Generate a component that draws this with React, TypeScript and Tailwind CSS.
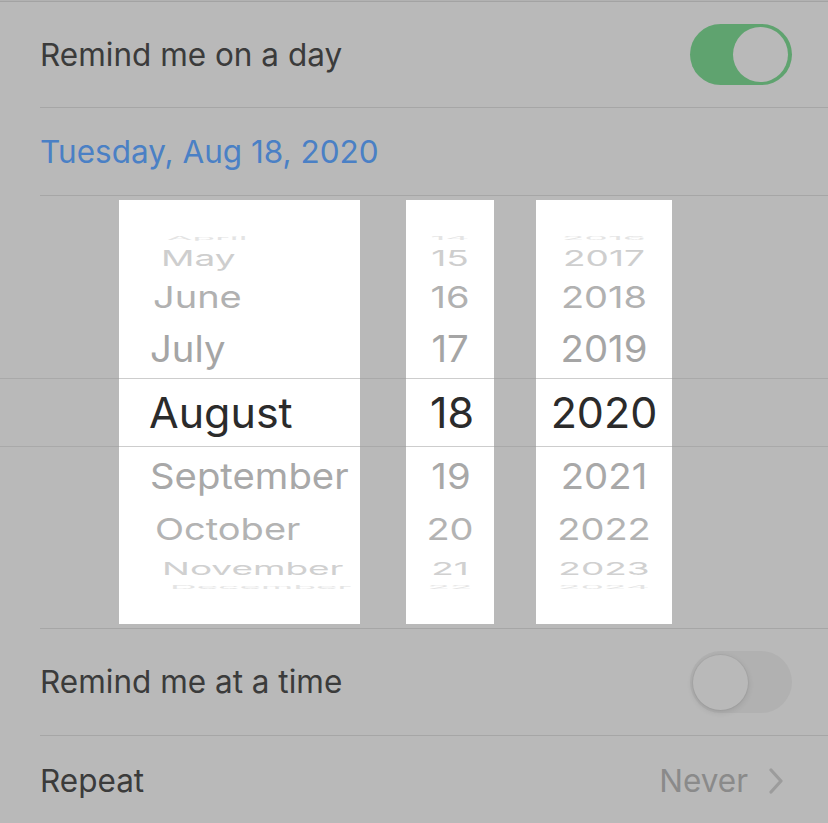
import React from "react";

type Row = { t: string; f: number; sy: number; c: string; pl: string };

const font = { fontFamily: "Inter, 'Noto Sans', sans-serif" };

function PickerColumn({
  rows,
  width,
  align,
}: {
  rows: Row[];
  width: string;
  align: "left" | "center";
}) {
  const heights = [
    "h-[10px]",
    "h-[30px]",
    "h-[47px]",
    "h-[58px]",
    "h-[69px]",
    "h-[58px]",
    "h-[48px]",
    "h-[31px]",
    "h-[6px]",
  ];
  return (
    <div className={`${width} h-[424px] bg-white flex flex-col overflow-hidden`}>
      <div className="h-[33px] shrink-0" />
      {rows.map((r, i) => (
        <div
          key={i}
          className={`${heights[i]} shrink-0 flex items-center ${
            align === "center" ? "justify-center" : "justify-start"
          } ${r.pl} ${i === 4 ? "border-y border-[#cdcdcd]" : ""} overflow-visible`}
        >
          <span
            className="leading-none whitespace-nowrap"
            style={{
              fontSize: r.f,
              color: r.c,
              transform: `scaleY(${r.sy})`,
              display: "inline-block",
            }}
          >
            {r.t}
          </span>
        </div>
      ))}
    </div>
  );
}

const colors = ["#e4e4e4", "#cecece", "#b1b1b1", "#a5a5a5", "#2b2b2b", "#a8a8a8", "#b3b3b3", "#d0d0d0", "#e4e4e4"];
const sizes = [37, 37, 38, 38.3, 43, 38.3, 38, 37, 37];
const sys = [0.12, 0.58, 0.8, 0.95, 0.98, 0.93, 0.8, 0.48, 0.12];

function mk(texts: string[], pls: string[]): Row[] {
  return texts.map((t, i) => ({ t, f: sizes[i], sy: sys[i], c: colors[i], pl: pls[i] }));
}

const months = mk(
  ["April", "May", "June", "July", "August", "September", "October", "November", "December"],
  ["pl-[48px]", "pl-[42px]", "pl-[34px]", "pl-[31px]", "pl-[30px]", "pl-[31px]", "pl-[36px]", "pl-[43px]", "pl-[51px]"]
);
const days = mk(
  ["14", "15", "16", "17", "18", "19", "20", "21", "22"],
  ["", "", "", "", "pl-[4px]", "pl-[2px]", "", "", ""]
);
const years = mk(
  ["2016", "2017", "2018", "2019", "2020", "2021", "2022", "2023", "2024"],
  ["", "", "", "", "", "", "", "", ""]
);

function Toggle({ on }: { on: boolean }) {
  if (on) {
    return (
      <div className="w-[102px] h-[61px] rounded-full bg-[#5fa36f] p-[3px] pr-[4px] flex justify-end items-center">
        <div className="w-[55px] h-[55px] rounded-full bg-[#b9b9b9]" />
      </div>
    );
  }
  return (
    <div className="w-[102px] h-[62px] rounded-full bg-[#b1b1b1] p-[3px] flex justify-start items-center">
      <div className="w-[55px] h-[55px] rounded-full bg-[#b9b9b9] shadow-[0_2px_6px_rgba(0,0,0,0.12),0_0_0_1px_rgba(0,0,0,0.03)]" />
    </div>
  );
}

export default function App() {
  return (
    <div className="w-[828px] h-[823px] bg-[#b9b9b9] overflow-hidden" style={font}>
      <div className="h-[2px] border-b border-[#a3a3a3] bg-[#b2b2b2]" />
      <div className="h-[105px] flex items-center justify-between pl-[40px] pr-[36px]">
        <span className="text-[31.5px] text-[#3b3b3b]">Remind me on a day</span>
        <Toggle on />
      </div>
      <div className="ml-[40px] h-px bg-[#a6a6a6]" />
      <div className="h-[87px] flex items-center pl-[40px]">
        <span className="text-[31.5px] text-[#4a80c5]">Tuesday, Aug 18, 2020</span>
      </div>
      <div className="ml-[40px] h-px bg-[#a6a6a6]" />
      <div className="relative h-[432px] pt-[4px]">
        <div className="absolute inset-x-0 top-[182px] h-[69px] border-y border-[#a9a9a9]" />
        <div className="relative flex pl-[119px] gap-[46px]">
          <PickerColumn rows={months} width="w-[241px]" align="left" />
          <PickerColumn rows={days} width="w-[88px]" align="center" />
          <div className="ml-[-4px]">
            <PickerColumn rows={years} width="w-[136px]" align="center" />
          </div>
        </div>
      </div>
      <div className="ml-[40px] h-px bg-[#a6a6a6]" />
      <div className="h-[106px] flex items-center justify-between pl-[40px] pr-[36px]">
        <span className="text-[31.5px] text-[#3b3b3b]">Remind me at a time</span>
        <Toggle on={false} />
      </div>
      <div className="ml-[40px] h-px bg-[#a6a6a6]" />
      <div className="h-[90px] flex items-center justify-between pl-[40px] pr-[44px]">
        <span className="text-[31.5px] text-[#3b3b3b]">Repeat</span>
        <div className="flex items-center gap-[20px]">
          <span className="text-[31.5px] text-[#8a8a8a]">Never</span>
          <svg width="16" height="26" viewBox="0 0 16 26" fill="none">
            <path d="M3 2 L13 13 L3 24" stroke="#9c9c9c" strokeWidth="3.2" strokeLinecap="round" strokeLinejoin="round" />
          </svg>
        </div>
      </div>
    </div>
  );
}
